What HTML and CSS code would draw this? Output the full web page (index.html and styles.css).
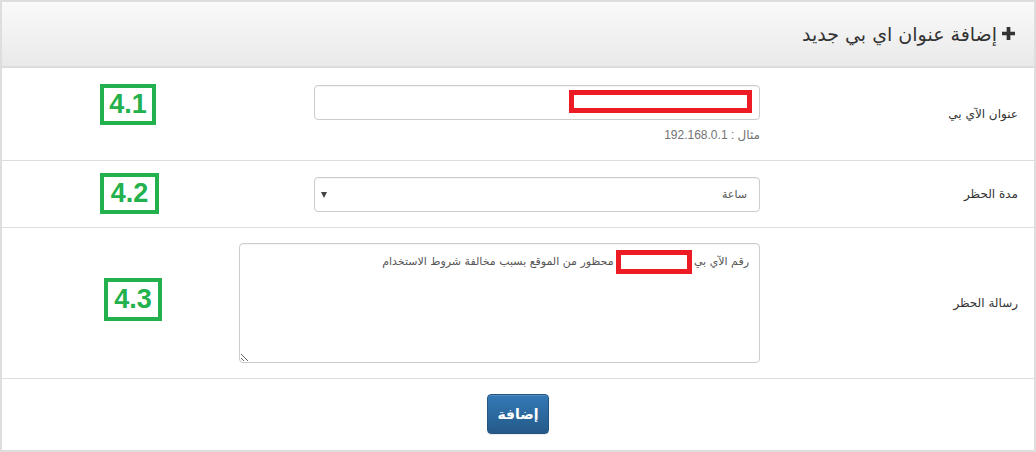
FILE: index.html
```html
<!DOCTYPE html>
<html lang="ar" dir="rtl">
<head>
<meta charset="utf-8">
<title>إضافة عنوان اي بي جديد</title>
<link rel="stylesheet" href="styles.css">
</head>
<body>
<div class="panel">
  <div class="panel-heading">
    <svg class="plus" width="14" height="14" viewBox="0 0 14 14"><path d="M5 0h4v5h5v4H9v5H5V9H0V5h5z" fill="#333"/></svg>
    <h3 class="panel-title">إضافة عنوان اي بي جديد</h3>
  </div>
  <form class="form">
    <div class="row row-ip">
      <label class="label">عنوان الآي بي</label>
      <div class="field">
        <div class="input-wrap">
          <input class="control input" type="text">
          <span class="redact redact-ip"></span>
        </div>
        <p class="help">مثال : 192.168.0.1</p>
      </div>
      <span class="tag tag-1">4.1</span>
    </div>
    <div class="row row-dur">
      <label class="label">مدة الحظر</label>
      <div class="field">
        <div class="select-wrap">
          <select class="control select"><option>ساعة</option></select>
        </div>
      </div>
      <span class="tag tag-2">4.2</span>
    </div>
    <div class="row row-msg">
      <label class="label">رسالة الحظر</label>
      <div class="field">
        <div class="textarea-wrap">
          <textarea class="control textarea">رقم الآي بي                       محظور من الموقع بسبب مخالفة شروط الاستخدام</textarea>
          <span class="redact redact-msg"></span>
        </div>
      </div>
      <span class="tag tag-3">4.3</span>
    </div>
    <div class="row row-actions">
      <button class="btn" type="button">إضافة</button>
    </div>
  </form>
</div>
</body>
</html>
```

FILE: styles.css
```css
html, body {
  margin: 0;
  padding: 0;
  background: #fff;
}
body {
  font-family: "Liberation Sans", "DejaVu Sans", sans-serif;
  font-size: 13px;
  color: #333;
}
.panel {
  box-sizing: border-box;
  width: 1036px;
  height: 452px;
  border: 2px solid #dedede;
  direction: rtl;
  overflow: hidden;
}
.panel-heading {
  box-sizing: border-box;
  height: 66px;
  border-bottom: 2px solid #dcdcdc;
  background: linear-gradient(#fafafa, #e9e9e9);
  display: flex;
  align-items: center;
  padding: 0 19px 0 0;
  gap: 5px;
}
.plus {
  display: block;
  width: 13px;
  height: 13px;
  margin-top: -2px;
}
.panel-title {
  margin: 0;
  font-size: 19px;
  font-weight: normal;
  color: #333;
  font-family: "DejaVu Sans", sans-serif;
  letter-spacing: -0.2px;
}
.form {
  margin: 0;
}
.row {
  position: relative;
  display: flex;
  border-bottom: 1px solid #dddddd;
  box-sizing: border-box;
}
.label {
  width: 274px;
  box-sizing: border-box;
  padding-right: 16px;
  display: flex;
  align-items: center;
  font-family: "DejaVu Sans", sans-serif;
  font-size: 12px;
  color: #333;
}
.field {
  display: flex;
  flex-direction: column;
}
.row-ip { height: 93px; }
.row-ip .field { padding-top: 17px; }
.row-dur { height: 67px; }
.row-dur .field { padding-top: 16px; }
.row-msg { height: 151px; }
.row-msg .field { padding-top: 15px; }
.row-actions {
  height: 72px;
  border-bottom: 0;
  justify-content: center;
  padding-top: 15px;
}
.control {
  box-sizing: border-box;
  border: 1px solid #cccccc;
  border-radius: 4px;
  background: #fff;
  box-shadow: inset 0 1px 1px rgba(0,0,0,0.04);
  font-family: "DejaVu Sans", sans-serif;
  font-size: 12px;
  color: #555;
  direction: rtl;
  margin: 0;
}
.input-wrap, .select-wrap, .textarea-wrap {
  position: relative;
}
.input {
  display: block;
  width: 446px;
  height: 35px;
  padding: 6px 12px;
}
.help {
  margin: 7px 0 0;
  font-size: 12px;
  line-height: 16px;
  color: #737373;
}
.select {
  display: block;
  width: 446px;
  height: 35px;
  padding: 0 12px 0 30px;
  -webkit-appearance: none;
  appearance: none;
  font-size: 11px;
  color: #555;
}
.select-wrap::after {
  content: "";
  position: absolute;
  left: 7px;
  top: 15px;
  border-left: 3px solid transparent;
  border-right: 3px solid transparent;
  border-top: 6px solid #444;
  pointer-events: none;
}
.textarea {
  display: block;
  width: 521px;
  height: 120px;
  padding: 9px 10px;
  font-size: 11px;
  line-height: 18px;
  resize: both;
  white-space: pre-wrap;
}
.redact {
  position: absolute;
  box-sizing: border-box;
  border: 5px solid #ed1c24;
  pointer-events: none;
}
.redact-ip {
  right: 8px;
  top: 5px;
  width: 183px;
  height: 23px;
}
.redact-msg {
  right: 68px;
  top: 7px;
  width: 76px;
  height: 24px;
}
.tag {
  position: absolute;
  box-sizing: border-box;
  border: 4px solid #22b14c;
  color: #22b14c;
  font-family: "Liberation Sans", sans-serif;
  font-weight: bold;
  font-size: 27px;
  line-height: 32px;
  text-align: center;
  direction: ltr;
}
.tag-1 { left: 98px; top: 16px; width: 56px; height: 41px; }
.tag-2 { left: 98px; top: 12px; width: 59px; height: 41px; }
.tag-3 { left: 102px; top: 50px; width: 58px; height: 43px; line-height: 34px; }
.btn {
  box-sizing: border-box;
  width: 62px;
  height: 40px;
  border: 1px solid #245580;
  border-radius: 4px;
  background: linear-gradient(#3379b6, #255a89);
  color: #fff;
  font-family: "DejaVu Sans", sans-serif;
  font-weight: bold;
  font-size: 14px;
  padding: 0;
  box-shadow: inset 0 1px 0 rgba(255,255,255,0.15), 0 1px 1px rgba(0,0,0,0.075);
}
```
